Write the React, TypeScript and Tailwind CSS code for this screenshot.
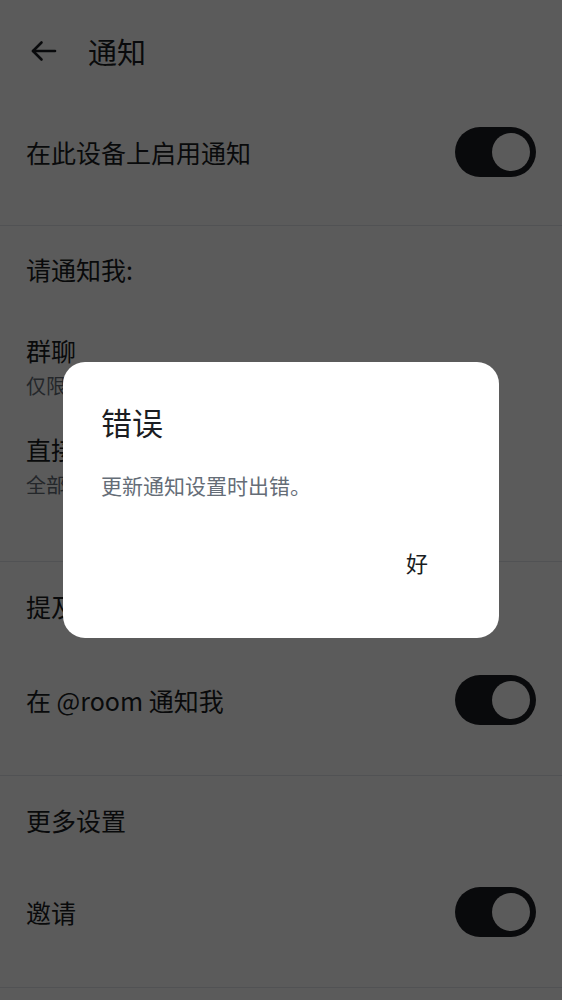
import React from "react";

const font = { fontFamily: '"Noto Sans CJK SC", "Noto Sans", sans-serif' };

const Toggle = () => (
  <div className="flex h-[50px] w-[81px] shrink-0 items-center justify-end rounded-full bg-[#1b1d22] pr-[6px]">
    <div className="h-[38px] w-[38px] rounded-full bg-white" />
  </div>
);

const App = () => {
  return (
    <div className="relative h-[1000px] w-[562px] overflow-hidden bg-white text-[#1b1d22]" style={font}>
      {/* header */}
      <div className="flex h-[100px] items-center">
        <svg className="ml-[29px] mt-[1px]" width="28" height="28" viewBox="0 0 28 28" fill="none" stroke="currentColor" strokeWidth="2.6" strokeLinecap="round" strokeLinejoin="round">
          <path d="M26 14H4" />
          <path d="M12.5 5.5 4 14l8.5 8.5" />
        </svg>
        <span className="ml-[31px] mt-[2px] text-[29px] leading-none">通知</span>
      </div>

      <div className="flex h-[126px] items-start border-b border-[#e3e6ea] px-[26px] pt-[27px]">
        <div className="flex h-[50px] w-full items-center justify-between">
          <span className="text-[25px] leading-none">在此设备上启用通知</span>
          <Toggle />
        </div>
      </div>

      <div className="border-b border-[#e3e6ea] px-[26px]">
        <div className="flex h-[88px] items-center text-[25px]">请通知我:</div>
        <div className="flex h-[112px] flex-col justify-center gap-[10px] pb-[4px]">
          <span className="text-[25px] leading-[25px]">群聊</span>
          <span className="text-[20px] leading-[25px] text-[#656d77]">仅限提及和关键词</span>
        </div>
        <div className="flex h-[135px] flex-col gap-[10px] pt-[11px]">
          <span className="text-[25px] leading-[25px]">直接聊天</span>
          <span className="text-[20px] leading-[25px] text-[#656d77]">全部消息</span>
        </div>
      </div>

      <div className="border-b border-[#e3e6ea] px-[26px]">
        <div className="flex h-[89px] items-center text-[25px]">提及</div>
        <div className="flex h-[124px] items-start pt-[24px]">
          <div className="flex h-[50px] w-full items-center justify-between">
            <span className="text-[25px] leading-none">在 @room 通知我</span>
            <Toggle />
          </div>
        </div>
      </div>

      <div className="border-b border-[#e3e6ea] px-[26px]">
        <div className="flex h-[89px] items-center text-[25px]">更多设置</div>
        <div className="flex h-[122px] items-start pt-[22px]">
          <div className="flex h-[50px] w-full items-center justify-between">
            <span className="text-[25px] leading-none">邀请</span>
            <Toggle />
          </div>
        </div>
      </div>

      {/* scrim */}
      <div className="absolute inset-0 bg-black/[0.643]" />

      {/* dialog */}
      <div className="absolute left-[63px] top-[362px] flex h-[276px] w-[436px] flex-col rounded-[22px] bg-white px-[38px]">
        <div className="mt-[44px] text-[31px] leading-none text-[#1b1d22]">错误</div>
        <div className="mt-[38px] text-[21px] leading-none text-[#656d77]">更新通知设置时出错。</div>
        <div className="mt-[55px] flex justify-end pr-[33px]">
          <span className="text-[22px] leading-none text-[#1b1d22]">好</span>
        </div>
      </div>
    </div>
  );
};

export default App;
